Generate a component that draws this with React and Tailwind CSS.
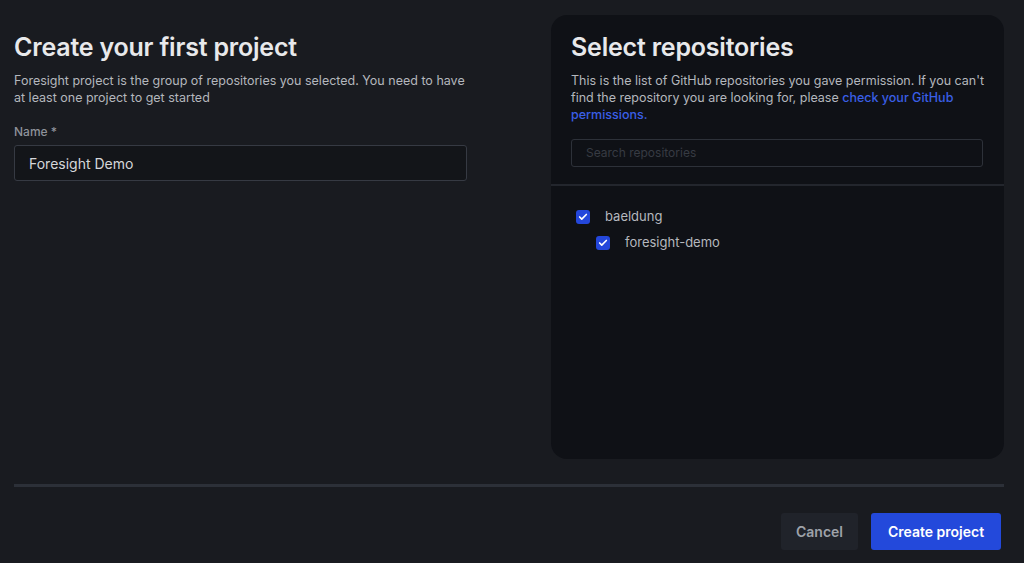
import { Check } from "lucide-react";

const RepoCheckbox = ({ label, nested }) => {
  return (
    <div className={`flex items-center h-[26px] ${nested ? "pl-[45px]" : "pl-[25px]"}`}>
      <span className="flex items-center justify-center w-[14px] h-[14px] rounded-[3px] bg-[#2447db]">
        <Check size={10} strokeWidth={4} className="text-white" />
      </span>
      <span className="ml-[15px] text-[13px] text-[#b5b8be]">{label}</span>
    </div>
  );
};

const App = () => {
  return (
    <div
      className="w-[1024px] h-[563px] bg-[#191b20] overflow-hidden flex flex-col"
      style={{ fontFamily: "Inter, 'Noto Sans', sans-serif" }}
    >
      <div className="flex px-[14px] pt-[15px] gap-[84px]">
        <div className="w-[453px] pt-[16px]">
          <h1 className="text-[25px] leading-[32px] font-semibold text-[#e8e9eb] tracking-[-0.2px]">
            Create your first project
          </h1>
          <p className="mt-[9px] text-[12.5px] leading-[17px] text-[#b4b7bd]">
            Foresight project is the group of repositories you selected. You need to have at least one
            project to get started
          </p>
          <label className="block mt-[18px] text-[12px] leading-[16px] font-medium text-[#8e929a]">
            Name *
          </label>
          <div className="mt-[5px] h-[36px] flex items-center px-[14px] rounded-[3px] border border-[#363a43] bg-[#131519] text-[14px] text-[#d6d7da]">
            Foresight Demo
          </div>
        </div>

        <div className="w-[453px] h-[444px] rounded-[16px] bg-[#0f1116] flex flex-col">
          <div className="pl-[20px] pr-[12px] pt-[16px] pb-[17px]">
            <h2 className="text-[25px] leading-[32px] font-semibold text-[#e8e9eb] tracking-[-0.2px]">
              Select repositories
            </h2>
            <p className="mt-[9px] text-[12.5px] leading-[17px] text-[#b4b7bd]">
              This is the list of GitHub repositories you gave permission. If you can't find the
              repository you are looking for, please{" "}
              <span className="font-medium text-[#3a5fe6]">check your GitHub permissions.</span>
            </p>
            <div className="mt-[16px] w-[412px] h-[28px] flex items-center px-[14px] rounded-[3px] border border-[#2d3139] text-[12px] text-[#373b43]">
              Search repositories
            </div>
          </div>
          <div className="h-[2px] bg-[#23262d]" />
          <div className="pt-[18px]">
            <RepoCheckbox label="baeldung" />
            <RepoCheckbox label="foresight-demo" nested />
          </div>
        </div>
      </div>

      <div className="ml-[14px] mr-[20px] mt-[25px] h-[3px] bg-[#2c3038]" />

      <div className="flex justify-end gap-[13px] pr-[23px] mt-[26px]">
        <button className="h-[37px] w-[77px] rounded-[3px] bg-[#20232a] text-[14px] font-semibold text-[#9ea2a9]">
          Cancel
        </button>
        <button className="h-[37px] w-[130px] rounded-[3px] bg-[#2349db] text-[14px] font-semibold text-white">
          Create project
        </button>
      </div>
    </div>
  );
};

export default App;
